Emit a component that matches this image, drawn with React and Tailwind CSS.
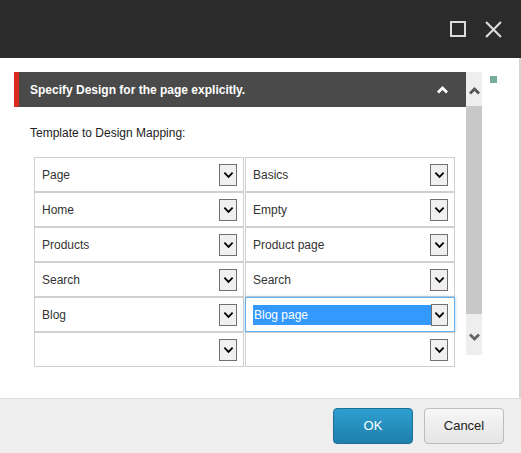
import { useState } from 'react';

const ROWS = [
  { template: 'Page', design: 'Basics' },
  { template: 'Home', design: 'Empty' },
  { template: 'Products', design: 'Product page' },
  { template: 'Search', design: 'Search' },
  { template: 'Blog', design: 'Blog page', selected: true },
  { template: '', design: '' },
];

function Chevron({ className = '', stroke = 'black', width = 2 }) {
  return (
    <svg viewBox="0 0 12 8" className={className} fill="none">
      <path d="M1.5 1.5 L6 6 L10.5 1.5" stroke={stroke} strokeWidth={width} />
    </svg>
  );
}

function SelectCell({ value, selected }) {
  return (
    <div
      className={`flex items-center h-[35px] w-[210px] bg-white border pl-[7px] pr-[6px] ${
        selected ? 'border-[#66afe9] shadow-[0_0_3px_rgba(102,175,233,0.6)]' : 'border-[#cfcfcf]'
      }`}
    >
      <div className="flex-1 h-[20px] flex items-center">
        {selected ? (
          <span className="h-[20px] w-[178px] bg-[#3399ff] text-white flex items-center pl-[1px]">{value}</span>
        ) : (
          <span className="text-[#333]">{value}</span>
        )}
      </div>
      <div className="w-[18px] h-[22px] border border-[#707070] bg-[#f0f0f0] flex items-center justify-center">
        <Chevron className="w-[11px] h-[8px]" />
      </div>
    </div>
  );
}

export default function App() {
  const [rows] = useState(ROWS);

  return (
    <div
      className="w-[521px] h-[453px] flex flex-col bg-white text-[12px] overflow-hidden"
      style={{ fontFamily: '"Liberation Sans", Arial, sans-serif' }}
    >
      {/* Title bar */}
      <div className="h-[58px] bg-[#2b2b2b] flex items-center justify-end pr-[19px] gap-[19px] shrink-0">
        <div className="w-[16px] h-[16px] border-2 border-[#dcdcdc]" />
        <svg viewBox="0 0 16 16" className="w-[17px] h-[17px]">
          <path d="M1 1 L15 15 M15 1 L1 15" stroke="#dcdcdc" strokeWidth="2" />
        </svg>
      </div>

      {/* Body */}
      <div className="flex-1 flex pl-[14px] pt-[14px] border-r-2 border-[#d6d6d6]">
        <div className="w-[452px] flex flex-col">
          {/* Section header */}
          <div className="h-[35px] bg-[#4a4a4a] border-l-[5px] border-[#dc291e] flex items-center pl-[11px] pr-[17px]">
            <span className="flex-1 text-white font-bold">Specify Design for the page explicitly.</span>
            <Chevron className="w-[13px] h-[8px] rotate-180" stroke="white" width={2.8} />
          </div>

          <div className="pl-[16px] pt-[17px] text-[#222]">Template to Design Mapping:</div>

          {/* Mapping grid */}
          <div className="pl-[20px] pt-[15px] flex flex-col">
            {rows.map((r, i) => (
              <div key={i} className="flex gap-[1px]">
                <SelectCell value={r.template} />
                <SelectCell value={r.design} selected={r.selected} />
              </div>
            ))}
          </div>
        </div>

        {/* Scrollbar */}
        <div className="w-[16px] h-[283px] bg-[#eeeeee] flex flex-col items-center">
          <div className="h-[34px] flex items-center justify-center pt-[4px]">
            <Chevron className="w-[13px] h-[8px] rotate-180" stroke="#555" width={2.8} />
          </div>
          <div className="w-full h-[208px] bg-[#c8c8c8]" />
          <div className="flex-1 flex items-center justify-center pt-[4px]">
            <Chevron className="w-[13px] h-[8px]" stroke="#666" width={2.8} />
          </div>
        </div>

        <div className="ml-[8px] mt-[4px] w-[7px] h-[7px] bg-[#77ad9a]" />
      </div>

      {/* Footer */}
      <div className="h-[55px] shrink-0 bg-[#eeeeee] border-t border-[#dcdcdc] flex items-start justify-end pt-[9px] pr-[17px] gap-[11px]">
        <button className="w-[80px] h-[36px] rounded-[4px] bg-gradient-to-b from-[#2d9fd0] to-[#1f7fab] border border-[#1d6f97] text-white text-[13px]">
          OK
        </button>
        <button className="w-[80px] h-[36px] rounded-[4px] bg-gradient-to-b from-[#f7f7f7] to-[#e4e4e4] border border-[#bdbdbd] text-[#222] text-[13px]">
          Cancel
        </button>
      </div>
    </div>
  );
}
